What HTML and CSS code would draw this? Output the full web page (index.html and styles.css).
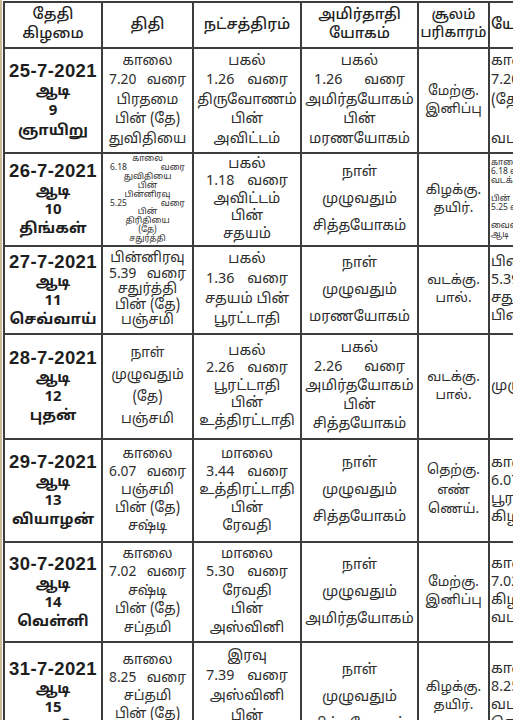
FILE: index.html
```html
<!DOCTYPE html>
<html lang="ta">
<head>
<meta charset="utf-8">
<title>ஆடி மாத பஞ்சாங்கம்</title>
<link rel="stylesheet" href="styles.css">
</head>
<body>
<div class="page">
<table class="cal">
  <colgroup>
    <col class="c1"><col class="c2"><col class="c3"><col class="c4"><col class="c5"><col class="c6">
  </colgroup>
  <tr class="head">
    <th><div>தேதி</div><div>கிழமை</div></th>
    <th><div>திதி</div></th>
    <th><div>நட்சத்திரம்</div></th>
    <th><div>அமிர்தாதி</div><div>யோகம்</div></th>
    <th class="hs"><div>சூலம்</div><div>பரிகாரம்</div></th>
    <th class="cut"><div>யோகம்</div></th>
  </tr>
  <tr class="r1">
    <td class="date"><div class="d">25-7-2021</div><div>ஆடி</div><div>9</div><div>ஞாயிறு</div></td>
    <td class="ti"><div>காலை</div><div class="sp"><span>7.20</span><span>வரை</span></div><div>பிரதமை</div><div>பின் (தே)</div><div>துவிதியை</div></td>
    <td><div>பகல்</div><div class="sp"><span>1.26</span><span>வரை</span></div><div>திருவோணம்</div><div>பின்</div><div>அவிட்டம்</div></td>
    <td><div>பகல்</div><div class="sp"><span>1.26</span><span>வரை</span></div><div>அமிர்தயோகம்</div><div>பின்</div><div>மரணயோகம்</div></td>
    <td class="sm"><div>மேற்கு.</div><div>இனிப்பு</div></td>
    <td class="cut"><div>காலை</div><div>7.20 வரை</div><div>(தே)</div><div>&nbsp;</div><div>வடக்கு</div></td>
  </tr>
  <tr class="r2">
    <td class="date"><div class="d">26-7-2021</div><div>ஆடி</div><div>10</div><div>திங்கள்</div></td>
    <td class="tiny"><div>காலை</div><div class="sp"><span>6.18</span><span>வரை</span></div><div>துவிதியை</div><div>பின்</div><div>பின்னிரவு</div><div class="sp"><span>5.25</span><span>வரை</span></div><div>பின்</div><div>திரிதியை</div><div>(தே)</div><div>சதுர்த்தி</div></td>
    <td class="t175"><div>பகல்</div><div class="sp"><span>1.18</span><span>வரை</span></div><div>அவிட்டம்</div><div>பின்</div><div>சதயம்</div></td>
    <td class="big"><div>நாள்</div><div>முழுவதும்</div><div>சித்தயோகம்</div></td>
    <td class="sm"><div>கிழக்கு.</div><div>தயிர்.</div></td>
    <td class="cut tiny"><div>காலை</div><div>6.18 வரை</div><div>வடக்கு</div><div>&nbsp;</div><div>பின்</div><div>5.25 வரை</div><div>&nbsp;</div><div>வைகை</div><div>ஆடி</div></td>
  </tr>
  <tr class="r3">
    <td class="date"><div class="d">27-7-2021</div><div>ஆடி</div><div>11</div><div>செவ்வாய்</div></td>
    <td class="ti t155"><div>பின்னிரவு</div><div class="sp"><span>5.39</span><span>வரை</span></div><div>சதுர்த்தி</div><div>பின் (தே)</div><div>பஞ்சமி</div></td>
    <td class="t20"><div>பகல்</div><div class="sp"><span>1.36</span><span>வரை</span></div><div>சதயம் பின்</div><div>பூரட்டாதி</div></td>
    <td class="big"><div>நாள்</div><div>முழுவதும்</div><div>மரணயோகம்</div></td>
    <td class="sm"><div>வடக்கு.</div><div>பால்.</div></td>
    <td class="cut"><div>பின்னிரவு</div><div>5.39 வரை</div><div>சதுர்த்தி</div><div>பின்</div></td>
  </tr>
  <tr class="r4">
    <td class="date"><div class="d">28-7-2021</div><div>ஆடி</div><div>12</div><div>புதன்</div></td>
    <td class="ti t22"><div>நாள்</div><div>முழுவதும்</div><div>(தே)</div><div>பஞ்சமி</div></td>
    <td class="t175"><div>பகல்</div><div class="sp"><span>2.26</span><span>வரை</span></div><div>பூரட்டாதி</div><div>பின்</div><div>உத்திரட்டாதி</div></td>
    <td class="t19"><div>பகல்</div><div class="sp"><span>2.26</span><span>வரை</span></div><div>அமிர்தயோகம்</div><div>பின்</div><div>சித்தயோகம்</div></td>
    <td class="sm"><div>வடக்கு.</div><div>பால்.</div></td>
    <td class="cut big"><div>&nbsp;</div><div>முழுவதும்</div><div>&nbsp;</div></td>
  </tr>
  <tr class="r5">
    <td class="date"><div class="d">29-7-2021</div><div>ஆடி</div><div>13</div><div>வியாழன்</div></td>
    <td class="ti"><div>காலை</div><div class="sp"><span>6.07</span><span>வரை</span></div><div>பஞ்சமி</div><div>பின் (தே)</div><div>சஷ்டி</div></td>
    <td><div>மாலை</div><div class="sp"><span>3.44</span><span>வரை</span></div><div>உத்திரட்டாதி</div><div>பின்</div><div>ரேவதி</div></td>
    <td class="big"><div>நாள்</div><div>முழுவதும்</div><div>சித்தயோகம்</div></td>
    <td class="sm sm3"><div>தெற்கு.</div><div>எண்</div><div>ணெய்.</div></td>
    <td class="cut"><div>காலை</div><div>6.07 வரை</div><div>பூரட்டாதி</div><div>கிழக்கு</div></td>
  </tr>
  <tr class="r6">
    <td class="date"><div class="d">30-7-2021</div><div>ஆடி</div><div>14</div><div>வெள்ளி</div></td>
    <td class="ti t185"><div>காலை</div><div class="sp"><span>7.02</span><span>வரை</span></div><div>சஷ்டி</div><div>பின் (தே)</div><div>சப்தமி</div></td>
    <td class="t185"><div>மாலை</div><div class="sp"><span>5.30</span><span>வரை</span></div><div>ரேவதி</div><div>பின்</div><div>அஸ்வினி</div></td>
    <td class="big"><div>நாள்</div><div>முழுவதும்</div><div>அமிர்தயோகம்</div></td>
    <td class="sm"><div>மேற்கு.</div><div>இனிப்பு</div></td>
    <td class="cut"><div>காலை</div><div>7.02 வரை</div><div>கிழக்கு</div><div>வடக்கு</div></td>
  </tr>
  <tr class="r7">
    <td class="date"><div class="d">31-7-2021</div><div>ஆடி</div><div>15</div><div>சனி</div></td>
    <td class="ti"><div>காலை</div><div class="sp"><span>8.25</span><span>வரை</span></div><div>சப்தமி</div><div>பின் (தே)</div><div>அஷ்டமி</div></td>
    <td class="t20"><div>இரவு</div><div class="sp"><span>7.39</span><span>வரை</span></div><div>அஸ்வினி</div><div>பின்</div><div>பரணி</div></td>
    <td class="big"><div>நாள்</div><div>முழுவதும்</div><div>சித்தயோகம்</div></td>
    <td class="sm"><div>கிழக்கு.</div><div>தயிர்.</div></td>
    <td class="cut"><div>காலை</div><div>8.25 வரை</div><div>வடக்கு</div><div>தெற்கு</div></td>
  </tr>
</table>
</div>
</body>
</html>
```
FILE: styles.css
```css
html, body {
  margin: 0;
  padding: 0;
  background: #ffffff;
  overflow: hidden;
  width: 513px;
  height: 720px;
}
.page {
  padding-top: 1px;
  padding-left: 1px;
  border-left: 2px solid #cdb995;
  width: 700px;
  font-family: "Noto Sans Tamil", "Lohit Tamil", "Noto Sans", "Liberation Sans", sans-serif;
  color: #2e2e2e;
}
.cal {
  border-collapse: collapse;
  table-layout: fixed;
  width: 595px;
  border: 2px solid #3d3d3d;
}
.c1 { width: 98px; }
.c2 { width: 91px; }
.c3 { width: 108px; }
.c4 { width: 117px; }
.c5 { width: 71px; }
.c6 { width: 110px; }
th, td {
  border: 2px solid #3d3d3d;
  padding: 0 1px;
  text-align: center;
  vertical-align: middle;
  font-size: 14.3px;
  line-height: 18px;
  white-space: nowrap;
  overflow: hidden;
}
th {
  font-weight: 500;
  font-size: 15px;
  line-height: 19px;
  color: #1f1f1f;
}
th.hs {
  font-size: 13.8px;
  line-height: 18px;
  padding: 0;
}
.head { height: 46px; }
.r1 { height: 105px; }
.r2 { height: 93px; }
.r3 { height: 88px; }
.r4 { height: 105px; }
.r5 { height: 103px; }
.r6 { height: 100px; }
.r7 { height: 110px; }
.r1 td { line-height: 19.5px; }
.ti { font-size: 13.8px; }
.t155 { line-height: 15.5px; }
.t175 { line-height: 17.5px; }
.t185 { line-height: 18.5px; }
.t19 { line-height: 19px; }
.t20 { line-height: 20px; }
.t22 { line-height: 22px; }
.date {
  font-weight: 700;
  font-size: 15px;
  line-height: 19px;
  color: #1e1e1e;
}
.r1 .date { line-height: 20px; }
.date .d {
  font-family: "Liberation Sans", sans-serif;
  font-size: 18.5px;
  letter-spacing: 0.4px;
  line-height: 22px;
}
.sp {
  display: flex;
  justify-content: space-between;
  padding: 0 5px;
}
td:nth-child(3) .sp, td:nth-child(4) .sp { padding: 0 11px; }
.tiny {
  font-size: 8.5px;
  line-height: 8.9px;
}
.r2 td.tiny { line-height: 8.9px; }
.tiny .sp { padding: 0 6px; }
.big {
  line-height: 27px;
}
.r1 td.sm, .sm {
  font-size: 13.5px;
  line-height: 18px;
}
.sm3 { line-height: 19.5px; }
.cut {
  text-align: left;
  padding-left: 1px;
}
```
